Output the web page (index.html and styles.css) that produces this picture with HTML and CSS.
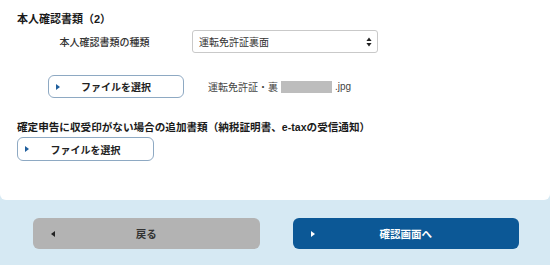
FILE: index.html
```html
<!DOCTYPE html>
<html lang="ja">
<head>
<meta charset="utf-8">
<title>本人確認書類</title>
<link rel="stylesheet" href="styles.css">
</head>
<body>
<div class="card">
  <h2 class="title">本人確認書類（2）</h2>
  <div class="select-row">
    <div class="label">本人確認書類の種類</div>
    <div class="select">
      <span>運転免許証裏面</span>
      <svg class="arrows" width="6" height="10" viewBox="0 0 6 10"><path d="M3 0.5 L5.6 4 L0.4 4 Z M3 9.5 L5.6 6 L0.4 6 Z" fill="#222"/></svg>
    </div>
  </div>
  <div class="file-row">
    <button class="file-btn file-btn-1"><svg class="tri" width="4" height="6" viewBox="0 0 4 6"><path d="M0 0 L4 3 L0 6 Z" fill="#1f5e9c"/></svg><span>ファイルを選択</span></button>
    <div class="filename">運転免許証・裏 <span class="mask"></span> .jpg</div>
  </div>
  <h2 class="title title2">確定申告に収受印がない場合の追加書類（納税証明書、e-taxの受信通知）</h2>
  <button class="file-btn file-btn-2"><svg class="tri" width="4" height="6" viewBox="0 0 4 6"><path d="M0 0 L4 3 L0 6 Z" fill="#1f5e9c"/></svg><span>ファイルを選択</span></button>
</div>
<div class="footer">
  <button class="nav-btn back"><svg class="tri" width="4" height="6" viewBox="0 0 4 6"><path d="M4 0 L0 3 L4 6 Z" fill="#222"/></svg><span>戻る</span></button>
  <button class="nav-btn next"><svg class="tri" width="4" height="6" viewBox="0 0 4 6"><path d="M0 0 L4 3 L0 6 Z" fill="#fff"/></svg><span>確認画面へ</span></button>
</div>
</body>
</html>
```
FILE: styles.css
```css
* { box-sizing: border-box; }
html, body { margin: 0; padding: 0; }
body {
  width: 550px;
  height: 265px;
  overflow: hidden;
  background: #d6e9f3;
  font-family: "Liberation Sans", "Noto Sans CJK JP", sans-serif;
  color: #222;
}
.card {
  background: #fff;
  height: 200px;
  padding: 12px 17px 0;
  border-radius: 0 0 6px 6px;
}
.title {
  margin: 0;
  font-size: 11px;
  line-height: 14px;
  font-weight: bold;
  color: #1a1a1a;
}
.title2 {
  margin-top: 22px;
  font-size: 10.6px;
}
.select-row {
  display: flex;
  align-items: center;
  margin-top: 4px;
  height: 23px;
}
.label {
  width: 175px;
  text-align: center;
  font-size: 10px;
  font-weight: 500;
  color: #333;
}
.select {
  width: 186px;
  height: 23px;
  border: 1px solid #c9c9c9;
  border-radius: 3px;
  display: flex;
  align-items: center;
  justify-content: space-between;
  padding: 0 5px 0 6px;
  font-size: 10px;
  color: #333;
}
.arrows { display: block; }
.file-row {
  display: flex;
  align-items: center;
  margin-top: 22px;
  height: 23px;
}
.file-btn {
  position: relative;
  display: flex;
  align-items: center;
  justify-content: center;
  background: #fff;
  border: 1px solid #8ea9c3;
  border-radius: 6px;
  font-family: inherit;
  font-size: 10px;
  font-weight: bold;
  color: #222;
  padding: 0;
}
.file-btn .tri {
  position: absolute;
  left: 7px;
  top: 50%;
  margin-top: -3px;
}
.file-btn-1 {
  margin-left: 31px;
  width: 136px;
  height: 23px;
}
.file-btn-2 {
  margin-top: 3px;
  width: 137px;
  height: 24px;
}
.filename {
  margin-left: 24px;
  font-size: 10px;
  color: #444;
  display: flex;
  align-items: center;
  gap: 3px;
}
.mask {
  display: inline-block;
  width: 51px;
  height: 12px;
  background: #bdbdbd;
}
.footer {
  display: flex;
  gap: 33px;
  padding: 18px 31px 0 33px;
}
.nav-btn {
  position: relative;
  flex: 1;
  height: 31px;
  border: none;
  border-radius: 6px;
  font-family: inherit;
  font-size: 10.5px;
  font-weight: bold;
  display: flex;
  align-items: center;
  justify-content: center;
  padding: 0;
}
.nav-btn .tri {
  position: absolute;
  left: 18px;
  top: 50%;
  margin-top: -3px;
}
.back {
  background: #b3b3b3;
  color: #333;
}
.next {
  background: #0c5896;
  color: #fff;
}
```
